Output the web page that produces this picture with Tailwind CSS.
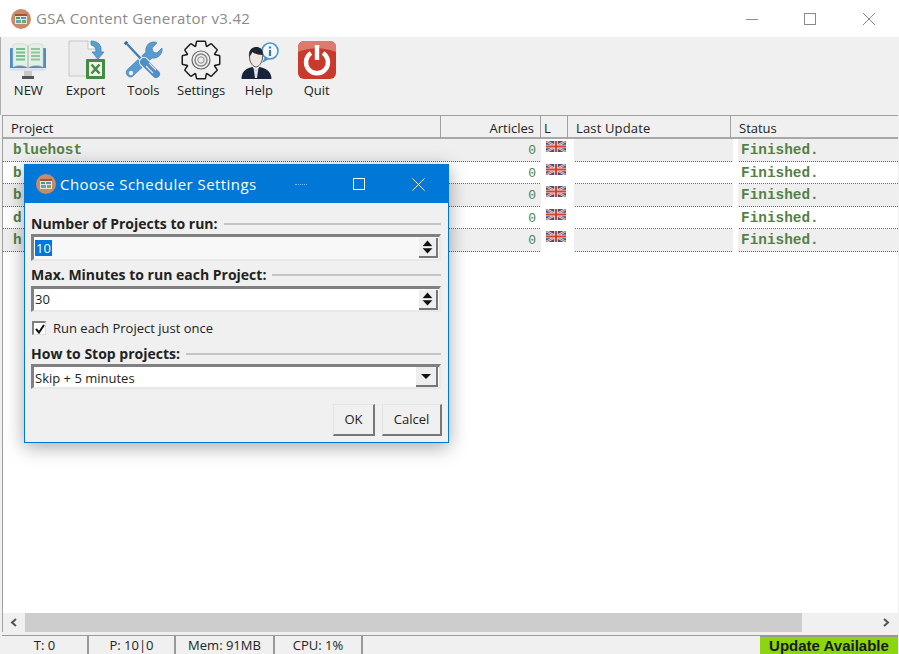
<!DOCTYPE html>
<html lang="en">
<head>
<meta charset="UTF-8">
<title>GSA Content Generator v3.42</title>
<script src="https://cdn.jsdelivr.net/npm/@tailwindcss/browser@4"></script>
</head>
<body class="bg-white">
<!-- shared svg symbols -->
<svg width="0" height="0" class="absolute">
  <defs>
    <symbol id="flag" viewBox="0 0 20 11">
      <rect width="20" height="11" fill="#3c4f86"/>
      <path d="M0 0L20 11M20 0L0 11" stroke="#e8e0dc" stroke-width="2.4"/>
      <path d="M0 0L20 11M20 0L0 11" stroke="#d0553f" stroke-width="0.9"/>
      <path d="M10 0V11M0 5.5H20" stroke="#f0e4e0" stroke-width="3.6"/>
      <path d="M10 0V11M0 5.5H20" stroke="#d8402c" stroke-width="2"/>
    </symbol>
    <symbol id="appicon" viewBox="0 0 20 20">
      <circle cx="10" cy="10" r="10" fill="#c98a66"/>
      <rect x="4" y="5" width="12" height="10" fill="#dfe6dc"/>
      <rect x="4" y="5" width="12" height="2" fill="#a8503a"/>
      <rect x="5" y="8" width="4" height="2" fill="#4f9a62"/>
      <rect x="10" y="8" width="5" height="2" fill="#5f8fc0"/>
      <rect x="5" y="11" width="5" height="3" fill="#6aa0b8"/>
      <rect x="11" y="11" width="4" height="3" fill="#78a868"/>
    </symbol>
    <g id="gearshape">
      <circle cx="20" cy="20" r="14"/>
      <path d="M15 8L16.200 2H23.800L25 8Z"/>
      <path d="M15 8L16.200 2H23.800L25 8Z" transform="rotate(45 20 20)"/>
      <path d="M15 8L16.200 2H23.800L25 8Z" transform="rotate(90 20 20)"/>
      <path d="M15 8L16.200 2H23.800L25 8Z" transform="rotate(135 20 20)"/>
      <path d="M15 8L16.200 2H23.800L25 8Z" transform="rotate(180 20 20)"/>
      <path d="M15 8L16.200 2H23.800L25 8Z" transform="rotate(225 20 20)"/>
      <path d="M15 8L16.200 2H23.800L25 8Z" transform="rotate(270 20 20)"/>
      <path d="M15 8L16.200 2H23.800L25 8Z" transform="rotate(315 20 20)"/>
    </g>
    <symbol id="spinup" viewBox="0 0 20 22">
      <path d="M10 3L16 10H4Z" fill="#111"/>
      <path d="M2 11H18" stroke="#f8f8f8" stroke-width="1"/>
      <path d="M10 19L16 12.500H4Z" fill="#111"/>
    </symbol>
  </defs>
</svg>

<div class="relative w-[899px] h-[654px] overflow-hidden flex flex-col bg-[#f0f0f0] text-[#222] font-['Open_Sans','Noto_Sans',sans-serif]">

  <!-- title bar -->
  <div class="h-[37px] bg-white flex items-center pl-[11px] shrink-0">
    <svg class="w-[20px] h-[20px]"><use href="#appicon"/></svg>
    <span class="ml-[5px] text-[15px] text-[#8a8a8a] tracking-[0.33px]">GSA Content Generator v3.42</span>
    <div class="ml-auto flex items-center">
      <svg class="w-[46px] h-[16px]" viewBox="0 0 46 16"><path d="M16 8.500H28" stroke="#8a8a8a"/></svg>
      <svg class="w-[58px] h-[16px]" viewBox="0 0 58 16"><rect x="28.500" y="2.500" width="11" height="11" fill="none" stroke="#8a8a8a"/></svg>
      <svg class="w-[65px] h-[16px]" viewBox="0 0 65 16"><path d="M29 2L41 14M41 2L29 14" stroke="#8a8a8a" fill="none"/></svg>
    </div>
  </div>

  <!-- toolbar -->
  <div class="h-[78px] shrink-0 flex shadow-[inset_1px_0_0_#b0b0b0]">
    <div class="w-[56.75px] flex flex-col items-center pt-[3px]">
      <svg class="w-[40px] h-[40px]" viewBox="0 0 40 40">
        <rect x="2" y="8" width="36" height="23" rx="1" fill="#4f8cc4"/>
        <rect x="2" y="28" width="36" height="3" fill="#d9e4ee"/>
        <path d="M5 5C10 3 16 3 20 6C24 3 30 3 35 5V27C30 25 24 25 20 28C16 25 10 25 5 27Z" fill="#e6efe6" stroke="#c6d2c8" stroke-width="0.6"/>
        <path d="M20 6V28" stroke="#9eb5a8"/>
        <path d="M8 9H17M8 12.500H17M8 16H17M8 19.500H17" stroke="#6fc08f" stroke-width="1.8"/>
        <path d="M23 9H32M23 12.500H32M23 16H32M23 19.500H32" stroke="#8cc79c" stroke-width="1.800"/>
        <rect x="16" y="31" width="8" height="5" fill="#c9c9c9"/>
        <rect x="14" y="36" width="12" height="3" fill="#555"/>
      </svg>
      <span class="text-[13px] leading-[17px] mt-[2px]">NEW</span>
    </div>
    <div class="w-[57.75px] flex flex-col items-center pt-[3px]">
      <svg class="w-[40px] h-[40px]" viewBox="0 0 40 40">
        <path d="M3 1H22L30 9V36H3Z" fill="#ececec" stroke="#c8c8c8"/>
        <path d="M22 1V9H30" fill="#fff" stroke="#c0c0c0"/>
        <path d="M25 1C32 1 36 5 35 12L38 12L32 19L26 12L30 12C30 8 29 6 25 5Z" fill="#5a9fd0" stroke="#3c7fb0" stroke-width="0.7"/>
        <rect x="20" y="19" width="19" height="20" rx="1" fill="#3f8f3f"/>
        <rect x="23" y="22" width="13" height="14" fill="#f2f6ee"/>
        <path d="M25.500 24.500L33.500 33.500M33.500 24.500L25.500 33.500" stroke="#3f8f3f" stroke-width="2.600"/>
      </svg>
      <span class="text-[13px] leading-[17px] mt-[2px]">Export</span>
    </div>
    <div class="w-[57.75px] flex flex-col items-center pt-[3px]">
      <svg class="w-[40px] h-[40px]" viewBox="0 0 40 40">
        <path d="M8 37C4 37 2 33 4 30L23 12C22 7 25 2 31 2C32 2 33 2 34 3L29 8L30 12L34 13L39 8C40 14 35 19 29 18L10 36C9 37 9 37 8 37Z" fill="#5a9bcf" stroke="#3f7fb5" stroke-width="0.7"/>
        <circle cx="8" cy="33" r="2.200" fill="#f0f0f0"/>
        <path d="M2 2L5 5" stroke="#2f6a9c" stroke-width="3.600"/>
        <path d="M4 4L19 20" stroke="#f0f0f0" stroke-width="4.400"/>
        <path d="M4 4L19 20" stroke="#3f7fb5" stroke-width="2.400"/>
        <path d="M21 22L33 34" stroke="#f0f0f0" stroke-width="10" stroke-linecap="round"/>
        <path d="M21 22L33 34" stroke="#4f8fc4" stroke-width="8" stroke-linecap="round"/>
        <path d="M23 26L30 33M26 23L33 30" stroke="#dbe8f2" stroke-width="1.200"/>
      </svg>
      <span class="text-[13px] leading-[17px] mt-[2px]">Tools</span>
    </div>
    <div class="w-[57.75px] flex flex-col items-center pt-[3px]">
      <svg class="w-[40px] h-[40px]" viewBox="0 0 40 40">
        <use href="#gearshape" fill="#1c1c1c" stroke="#1c1c1c" stroke-width="3" stroke-linejoin="round"/>
        <use href="#gearshape" fill="#f0f0f0"/>
        <circle cx="20" cy="20" r="9" fill="none" stroke="#666" stroke-width="1.200"/>
        <circle cx="20" cy="20" r="6" fill="none" stroke="#888" stroke-width="1.500"/>
        <circle cx="20" cy="20" r="3.200" fill="none" stroke="#888" stroke-width="1"/>
      </svg>
      <span class="text-[13px] leading-[17px] mt-[2px]">Settings</span>
    </div>
    <div class="w-[57.75px] flex flex-col items-center pt-[3px]">
      <svg class="w-[40px] h-[40px]" viewBox="0 0 40 40">
        <circle cx="31" cy="11" r="8" fill="#f4f8fb" stroke="#4a95cf" stroke-width="1.600"/>
        <path d="M26 17L23 23L30 19Z" fill="#4a95cf"/>
        <path d="M31 6.500V8.500M31 10V16" stroke="#2f7fbd" stroke-width="2.200"/>
        <g transform="translate(1.500 0)">
          <path d="M9 17C8 10 12 8 16 8C20 8 23 11 22 17C22 23 18 27 15.500 27C13 27 9 23 9 17Z" fill="#f0e8e0" stroke="#333" stroke-width="0.800"/>
          <path d="M9 17C8 9 12 7 16 7C20 7 23 10 22 15C18 15 14 14 12 12C11 14 10 15 9 17Z" fill="#1f2530"/>
          <path d="M1 39C1 31 6 28 12 27L15.500 31L19 27C25 28 31 31 31 39Z" fill="#18233c"/>
          <path d="M13 28L15.500 31L18 28L16.500 38H14.500Z" fill="#dfe4ea"/>
        </g>
      </svg>
      <span class="text-[13px] leading-[17px] mt-[2px]">Help</span>
    </div>
    <div class="w-[57.75px] flex flex-col items-center pt-[3px]">
      <svg class="w-[40px] h-[40px]" viewBox="0 0 40 40">
        <rect x="1" y="1" width="38" height="38" rx="6" fill="#c93a2c"/>
        <path d="M1 7A6 6 0 0 1 7 1H33A6 6 0 0 1 39 7V12C26 7 14 7 1 12Z" fill="#dc7a70"/>
        <path d="M14 13A11 11 0 1 0 26 13" fill="none" stroke="#fff" stroke-width="4.400"/>
        <path d="M20 5V20" stroke="#fff" stroke-width="4.400"/>
      </svg>
      <span class="text-[13px] leading-[17px] mt-[2px]">Quit</span>
    </div>
  </div>

  <!-- project list -->
  <div class="flex-1 min-h-0 ml-[2px] mr-[1px] border-t border-l border-[#a0a0a0] bg-white flex flex-col">
    <div class="h-[23px] shrink-0 grid grid-cols-[438px_100px_27px_163px_1fr] bg-[#f0f0f0] border-b-2 border-[#a8a8a8] text-[13px] leading-[24px]">
      <div class="pl-[8px] border-r border-[#a0a0a0]">Project</div>
      <div class="pr-[6px] text-right border-r border-[#a0a0a0]">Articles</div>
      <div class="pl-[3px] border-r border-[#a0a0a0]">L</div>
      <div class="pl-[8px] border-r border-[#a0a0a0] tracking-[0.15px]">Last Update</div>
      <div class="pl-[8px]">Status</div>
    </div>

    <div class="h-[22.5px] shrink-0 grid grid-cols-[438px_100px_33px_159px_5px_1fr] bg-[#efefef] border-b border-dotted border-[#666] font-['Liberation_Mono',monospace] font-bold text-[14.4px] leading-[23px] text-[#557f45]">
      <div class="pl-[10px]">bluehost</div>
      <div class="pr-[5px] text-right font-normal text-[13px]">0</div>
      <div class="bg-white pl-[5px] pt-[2px]"><svg class="w-[20px] h-[11px] block"><use href="#flag"/></svg></div>
      <div></div>
      <div class="bg-white"></div>
      <div class="pl-[3px]">Finished.</div>
    </div>
    <div class="h-[22.5px] shrink-0 grid grid-cols-[438px_100px_33px_159px_5px_1fr] bg-white border-b border-dotted border-[#666] font-['Liberation_Mono',monospace] font-bold text-[14.4px] leading-[23px] text-[#557f45]">
      <div class="pl-[10px]">b</div>
      <div class="pr-[5px] text-right font-normal text-[13px]">0</div>
      <div class="bg-white pl-[5px] pt-[2px]"><svg class="w-[20px] h-[11px] block"><use href="#flag"/></svg></div>
      <div></div>
      <div class="bg-white"></div>
      <div class="pl-[3px]">Finished.</div>
    </div>
    <div class="h-[22.5px] shrink-0 grid grid-cols-[438px_100px_33px_159px_5px_1fr] bg-[#efefef] border-b border-dotted border-[#666] font-['Liberation_Mono',monospace] font-bold text-[14.4px] leading-[23px] text-[#557f45]">
      <div class="pl-[10px]">b</div>
      <div class="pr-[5px] text-right font-normal text-[13px]">0</div>
      <div class="bg-white pl-[5px] pt-[2px]"><svg class="w-[20px] h-[11px] block"><use href="#flag"/></svg></div>
      <div></div>
      <div class="bg-white"></div>
      <div class="pl-[3px]">Finished.</div>
    </div>
    <div class="h-[22.5px] shrink-0 grid grid-cols-[438px_100px_33px_159px_5px_1fr] bg-white border-b border-dotted border-[#666] font-['Liberation_Mono',monospace] font-bold text-[14.4px] leading-[23px] text-[#557f45]">
      <div class="pl-[10px]">d</div>
      <div class="pr-[5px] text-right font-normal text-[13px]">0</div>
      <div class="bg-white pl-[5px] pt-[2px]"><svg class="w-[20px] h-[11px] block"><use href="#flag"/></svg></div>
      <div></div>
      <div class="bg-white"></div>
      <div class="pl-[3px]">Finished.</div>
    </div>
    <div class="h-[22.5px] shrink-0 grid grid-cols-[438px_100px_33px_159px_5px_1fr] bg-[#efefef] border-b border-dotted border-[#666] font-['Liberation_Mono',monospace] font-bold text-[14.4px] leading-[23px] text-[#557f45]">
      <div class="pl-[10px]">h</div>
      <div class="pr-[5px] text-right font-normal text-[13px]">0</div>
      <div class="bg-white pl-[5px] pt-[2px]"><svg class="w-[20px] h-[11px] block"><use href="#flag"/></svg></div>
      <div></div>
      <div class="bg-white"></div>
      <div class="pl-[3px]">Finished.</div>
    </div>

    <div class="flex-1"></div>

    <!-- horizontal scrollbar -->
    <div class="h-[19px] shrink-0 bg-[#f0f0f0] flex items-center">
      <svg class="w-[22px] h-[19px]" viewBox="0 0 22 19"><path d="M13 6L9 9.500L13 13" fill="none" stroke="#555" stroke-width="2"/></svg>
      <div class="w-[777px] h-full bg-[#cdcdcd]"></div>
      <svg class="w-[22px] h-[19px] ml-auto mr-[1px]" viewBox="0 0 22 19"><path d="M9 6L13 9.500L9 13" fill="none" stroke="#555" stroke-width="2"/></svg>
    </div>
  </div>

  <!-- status bar -->
  <div class="h-[22px] shrink-0 pt-[3px] flex text-[13px] leading-[19px]">
    <div class="ml-[2px] w-[87px] text-center border-t border-r-2 border-[#999]">T: 0</div>
    <div class="w-[87px] text-center border-t border-r-2 border-[#999]">P: 10|0</div>
    <div class="w-[99px] text-center border-t border-r-2 border-[#999]">Mem: 91MB</div>
    <div class="w-[88px] text-center border-t border-r-2 border-[#999]">CPU: 1%</div>
    <div class="w-[397px] border-t border-[#999]"></div>
    <div class="w-[138px] border-t-2 border-[#999] bg-[#8bd60e] text-center font-['Liberation_Sans',sans-serif] font-bold text-[15px] leading-[17px] text-[#1a1a1a]">Update Available</div>
  </div>

  <!-- scheduler dialog -->
  <div class="absolute left-[24px] top-[164px] w-[425px] h-[279px] flex flex-col bg-[#f0f0f0] border border-[#0078d7] shadow-[0_4px_18px_rgba(0,0,0,0.35)]">
    <div class="h-[38px] shrink-0 bg-[#0078d7] flex items-center pl-[11px] text-white">
      <svg class="w-[20px] h-[20px]"><use href="#appicon"/></svg>
      <span class="ml-[4px] text-[15px] tracking-[0.45px]">Choose Scheduler Settings</span>
      <div class="ml-auto flex items-center">
        <div class="w-[12px] border-t border-dotted border-white/50 mr-[46px]"></div>
        <svg class="w-[12px] h-[12px] mr-[47px]" viewBox="0 0 12 12"><rect x="0.500" y="0.500" width="11" height="11" fill="none" stroke="#fff"/></svg>
        <svg class="w-[13px] h-[13px] mr-[23px]" viewBox="0 0 13 13"><path d="M0.500 0.500L12.500 12.500M12.500 0.500L0.500 12.500" stroke="#fff" fill="none"/></svg>
      </div>
    </div>

    <div class="flex-1 pl-[6px] pr-[7px] flex flex-col">
      <div class="mt-[13px] h-[16px] flex items-center gap-[6px] font-bold text-[14px] leading-[16px]">
        <span>Number of Projects to run:</span>
        <div class="flex-1 border-t-2 border-[#c4c4c4]"></div>
      </div>
      <div class="mt-[2px] h-[27px] flex items-center border-t-[3px] border-l-[3px] border-[#808080] border-b-2 border-r-2 border-b-[#e8e8e8] border-r-[#e8e8e8] bg-[#f8f8f8] text-[13px] pl-[1px]">
        <span class="bg-[#0078d7] text-white leading-[16px] px-[1px]">10</span>
        <div class="ml-auto mr-[1px] w-[19px] h-[20px] bg-[#eee] border-r-2 border-b-2 border-[#777]"><svg class="w-[17px] h-[18px] block"><use href="#spinup"/></svg></div>
      </div>
      <div class="mt-[6px] h-[16px] flex items-center gap-[6px] font-bold text-[14px] leading-[16px]">
        <span>Max. Minutes to run each Project:</span>
        <div class="flex-1 border-t-2 border-[#c4c4c4]"></div>
      </div>
      <div class="mt-[3px] h-[26px] flex items-center border-t-[3px] border-l-[3px] border-[#808080] border-b-2 border-r-2 border-b-[#e8e8e8] border-r-[#e8e8e8] bg-white text-[13px] pl-[1px]">
        <span class="leading-[16px] -mt-[2px]">30</span>
        <div class="ml-auto mr-[1px] w-[19px] h-[20px] bg-[#eee] border-r-2 border-b-2 border-[#777]"><svg class="w-[17px] h-[18px] block"><use href="#spinup"/></svg></div>
      </div>
      <div class="mt-[9px] h-[14px] flex items-center pl-[1px] text-[13px]">
        <div class="w-[14px] h-[14px] bg-white border-t-2 border-l-2 border-[#808080] border-r border-b border-r-[#ddd] border-b-[#ddd] flex items-center justify-center">
          <svg class="w-[10px] h-[10px]" viewBox="0 0 10 10"><path d="M1 5L4 8.500L9 1" fill="none" stroke="#111" stroke-width="2"/></svg>
        </div>
        <span class="ml-[7px] leading-[14px]">Run each Project just once</span>
      </div>
      <div class="mt-[11px] h-[16px] flex items-center gap-[6px] font-bold text-[14px] leading-[16px]">
        <span>How to Stop projects:</span>
        <div class="flex-1 border-t-2 border-[#c4c4c4]"></div>
      </div>
      <div class="mt-[2px] h-[25px] flex items-center border-t-[3px] border-l-[3px] border-[#808080] border-b-2 border-r-2 border-b-[#e8e8e8] border-r-[#e8e8e8] bg-white text-[13px] pl-[1px]">
        <span class="leading-[16px] mt-[2px]">Skip + 5 minutes</span>
        <div class="ml-auto mr-[1px] w-[22px] h-[20px] bg-[#eee] border-r-2 border-b-2 border-[#777] flex items-center justify-center">
          <svg class="w-[10px] h-[5px]" viewBox="0 0 10 5"><path d="M0 0H10L5 5Z" fill="#111"/></svg>
        </div>
      </div>
      <div class="mt-[15px] -mr-[1px] flex justify-end gap-[7px] text-[13px]">
        <div class="w-[42px] h-[32px] flex items-center justify-center bg-[#f0f0f0] border-t border-l border-[#e4e4e4] border-r-2 border-b-2 border-r-[#777] border-b-[#777]">OK</div>
        <div class="w-[60px] h-[32px] flex items-center justify-center bg-[#f0f0f0] border-t border-l border-[#e4e4e4] border-r-2 border-b-2 border-r-[#777] border-b-[#777]">Calcel</div>
      </div>
    </div>
  </div>
</div>
</body>
</html>
